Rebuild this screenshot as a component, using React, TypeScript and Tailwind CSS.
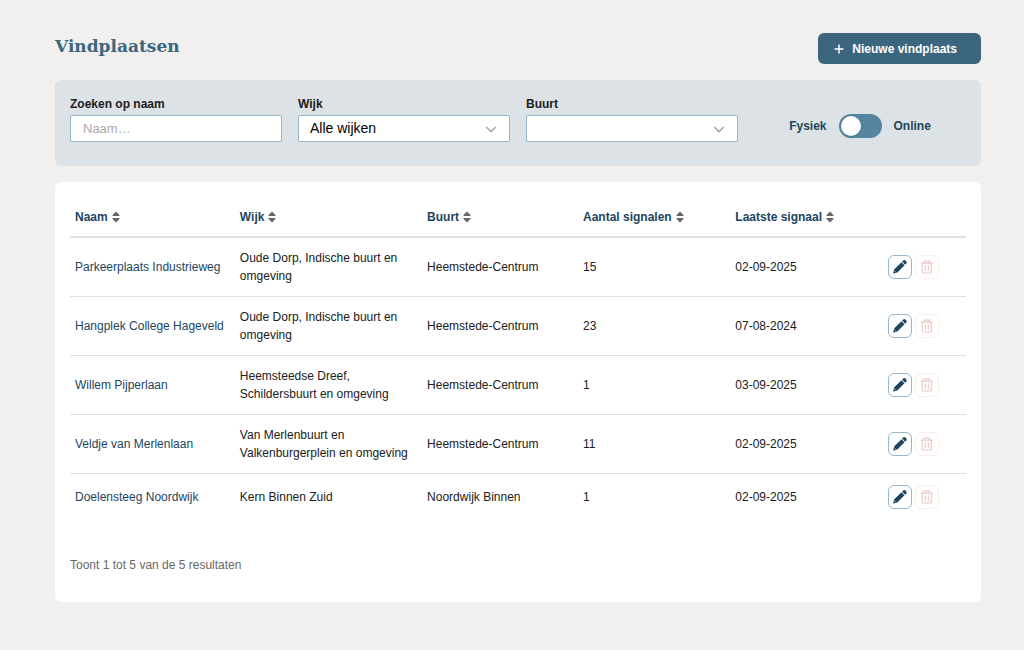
import { useState } from "react";

type Row = { naam: string; wijk: string; buurt: string; aantal: number; datum: string };

const rows: Row[] = [
  { naam: "Parkeerplaats Industrieweg", wijk: "Oude Dorp, Indische buurt en omgeving", buurt: "Heemstede-Centrum", aantal: 15, datum: "02-09-2025" },
  { naam: "Hangplek College Hageveld", wijk: "Oude Dorp, Indische buurt en omgeving", buurt: "Heemstede-Centrum", aantal: 23, datum: "07-08-2024" },
  { naam: "Willem Pijperlaan", wijk: "Heemsteedse Dreef, Schildersbuurt en omgeving", buurt: "Heemstede-Centrum", aantal: 1, datum: "03-09-2025" },
  { naam: "Veldje van Merlenlaan", wijk: "Van Merlenbuurt en Valkenburgerplein en omgeving", buurt: "Heemstede-Centrum", aantal: 11, datum: "02-09-2025" },
  { naam: "Doelensteeg Noordwijk", wijk: "Kern Binnen Zuid", buurt: "Noordwijk Binnen", aantal: 1, datum: "02-09-2025" },
];

const columns = [
  { label: "Naam", width: "w-[18.4%]" },
  { label: "Wijk", width: "w-[20.9%]" },
  { label: "Buurt", width: "w-[17.4%]" },
  { label: "Aantal signalen", width: "w-[17%]" },
  { label: "Laatste signaal", width: "w-[17%]" },
];

function SortIcon() {
  return (
    <svg className="h-3 w-2" viewBox="0 0 8 12" fill="#686868" aria-hidden="true">
      <path d="M4 .6 7.5 4Q7.9 5 7 5H1Q.1 5 .5 4Z" />
      <path d="M4 11.4 7.5 8Q7.9 7 7 7H1Q.1 7 .5 8Z" />
    </svg>
  );
}

function PencilIcon() {
  return (
    <svg className="h-4 w-4" viewBox="0 0 16 16" fill="#1d455e" aria-hidden="true">
      <path d="M10.1 2.6 11.3 1.5Q12.3.6 13.3 1.5L14.3 2.5Q15.2 3.5 14.3 4.5L13.1 5.7Z" />
      <path d="M9.5 3.2 12.5 6.3 5.4 13.4 1.4 14.6Q.9 14.7 1.1 14.2L2.3 10.3Z" />
      <path d="M2.3 11.7 4.1 13.5" fill="none" stroke="#fff" strokeWidth=".6" />
    </svg>
  );
}

function TrashIcon() {
  return (
    <svg className="h-4 w-4" viewBox="0 0 16 16" fill="none" stroke="#edc9c5" strokeWidth="1.2" aria-hidden="true">
      <path d="M1.8 4.2H13.8M5.2 4V2.2H10.4V4M3.3 4.4V13Q3.3 14 4.3 14H11.3Q12.3 14 12.3 13V4.4M6.3 6.3V12M9.3 6.3V12" />
    </svg>
  );
}

function Chevron() {
  return (
    <svg className="pointer-events-none absolute top-2 right-[13px] h-3 w-3" viewBox="0 0 12 12" fill="none" stroke="#a3a7aa" strokeWidth="1.5" aria-hidden="true">
      <path d="M1.2 4 6 8.6 10.8 4" />
    </svg>
  );
}

const field = "block h-[27px] w-full appearance-none rounded-xs border border-[#94b8cc] bg-white text-black placeholder:text-[#aaaaaa]";
const label = "mb-[3px] block text-[12px] leading-4 font-bold text-[#202020]";

export default function App() {
  const [online, setOnline] = useState(false);
  return (
    <main className="min-h-screen bg-[#f1f0ee] pt-8 pr-[43px] pb-12 pl-[55px] font-['Liberation_Sans',Arial,sans-serif] text-[12px] text-[#202020]">
      <header className="mb-4 flex items-start justify-between">
        <h1 className="font-['DejaVu_Serif',serif] text-[17px] leading-7 font-bold text-[#3c657e]">Vindplaatsen</h1>
        <button type="button" className="mt-px flex h-[31px] items-center gap-2 rounded-md bg-[#3c657e] pr-6 pl-4 text-[12px] font-bold text-white">
          <svg className="h-[10px] w-[10px]" viewBox="0 0 10 10" stroke="currentColor" strokeWidth="1.5" aria-hidden="true">
            <path d="M5 .5V9.5M.5 5H9.5" />
          </svg>
          Nieuwe vindplaats
        </button>
      </header>

      <section className="flex gap-4 rounded-md bg-[#dde2e6] px-[15px] pt-4 pb-6">
        <div className="w-[212px]">
          <label htmlFor="naam" className={label}>Zoeken op naam</label>
          <input id="naam" type="text" placeholder="Naam…" className={`${field} px-3 text-[13px]`} />
        </div>
        <div className="w-[212px]">
          <label htmlFor="wijk" className={label}>Wijk</label>
          <div className="relative">
            <select id="wijk" className={`${field} px-[11px] text-[14px]`}>
              <option>Alle wijken</option>
            </select>
            <Chevron />
          </div>
        </div>
        <div className="w-[212px]">
          <label htmlFor="buurt" className={label}>Buurt</label>
          <div className="relative">
            <select id="buurt" className={`${field} px-[11px] text-[14px]`}>
              <option></option>
            </select>
            <Chevron />
          </div>
        </div>
        <label className="mx-auto mt-[18px] flex h-6 items-center gap-3 font-bold text-[#21465b]">
          Fysiek
          <input type="checkbox" role="switch" aria-label="Online" checked={online} onChange={(e) => setOnline(e.target.checked)} className="h-6 w-[43px] appearance-none rounded-full bg-[#55859f] p-0.5 before:block before:size-5 before:rounded-full before:bg-white before:shadow-sm checked:before:ml-[19px]" />
          Online
        </label>
      </section>

      <section className="mt-4 rounded-md bg-white px-[15px] pt-4 pb-[29px]">
        <table className="w-full table-fixed border-separate border-spacing-0 text-left">
          <thead>
            <tr className="h-10">
              {columns.map((c) => (
                <th key={c.label} className={`${c.width} border-b-2 border-[#dde2e6] px-[5px] font-bold text-[#1d455e]`}>
                  <button type="button" className="flex items-center gap-1 font-bold">
                    {c.label}
                    <SortIcon />
                  </button>
                </th>
              ))}
              <th className="border-b-2 border-[#dde2e6]" aria-label="Acties" />
            </tr>
          </thead>
          <tbody className="[&_td]:border-b [&_td]:border-[#dde2e6] [&_td]:px-[5px] [&_td]:py-[11px] [&_td]:leading-[18px] [&_tr:last-child_td]:border-0">
            {rows.map((r) => (
              <tr key={r.naam}>
                <td><a href="#" className="text-[#1d455e]">{r.naam}</a></td>
                <td>{r.wijk}</td>
                <td>{r.buurt}</td>
                <td>{r.aantal}</td>
                <td>{r.datum}</td>
                <td>
                  <div className="flex gap-[3px]">
                    <button type="button" aria-label="Bewerken" className="flex size-6 items-center justify-center rounded-md border border-[#94b8cc]"><PencilIcon /></button>
                    <button type="button" disabled aria-label="Verwijderen" className="flex size-6 items-center justify-center rounded-md border border-[#fbeeec]"><TrashIcon /></button>
                  </div>
                </td>
              </tr>
            ))}
          </tbody>
        </table>
        <p className="mt-[37px] leading-4 text-[#686868]">Toont 1 tot 5 van de 5 resultaten</p>
      </section>
    </main>
  );
}
